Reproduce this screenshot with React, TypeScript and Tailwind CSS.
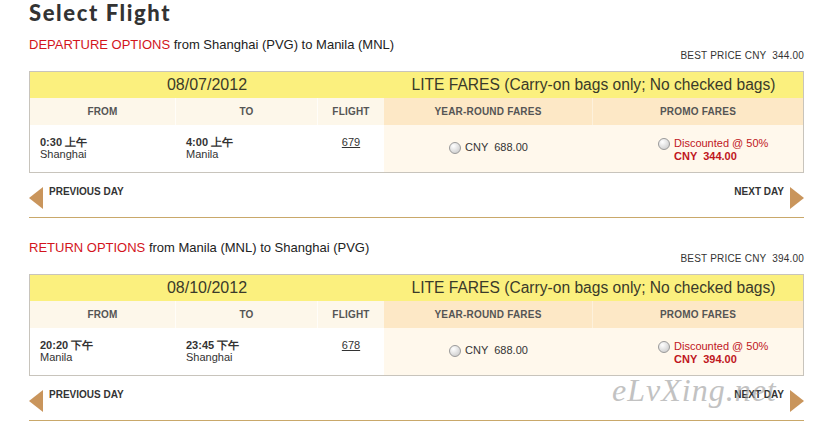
import React from 'react';

type Leg = {
  kind: string;
  route: string;
  best: string;
  date: string;
  depTime: string;
  depCity: string;
  arrTime: string;
  arrCity: string;
  flight: string;
  yearRound: string;
  promo: string;
};

const legs: Leg[] = [
  {
    kind: 'DEPARTURE OPTIONS',
    route: 'from Shanghai (PVG) to Manila (MNL)',
    best: '344.00',
    date: '08/07/2012',
    depTime: '0:30 上午',
    depCity: 'Shanghai',
    arrTime: '4:00 上午',
    arrCity: 'Manila',
    flight: '679',
    yearRound: '688.00',
    promo: '344.00',
  },
  {
    kind: 'RETURN OPTIONS',
    route: 'from Manila (MNL) to Shanghai (PVG)',
    best: '394.00',
    date: '08/10/2012',
    depTime: '20:20 下午',
    depCity: 'Manila',
    arrTime: '23:45 下午',
    arrCity: 'Shanghai',
    flight: '678',
    yearRound: '688.00',
    promo: '394.00',
  },
];

function Radio() {
  return (
    <span className="inline-block w-[12px] h-[12px] rounded-full border border-[#9a9a9a] bg-[radial-gradient(circle_at_35%_30%,#ffffff,#c4c4c4)] shrink-0" />
  );
}

function LegBlock({ leg }: { leg: Leg }) {
  return (
    <div className="ml-[29px] w-[775px]">
      <p className="text-[13px] leading-[16px] text-[#222]">
        <span className="text-[#d3141c]">{leg.kind}</span> {leg.route}
      </p>
      <p className="text-right text-[10px] leading-[12px] text-[#333] -mt-[3px] mb-[9px] whitespace-pre tracking-[0.2px]">
        BEST PRICE CNY  {leg.best}
      </p>

      <div className="border border-[#c8c4bc]">
        <div className="grid grid-cols-[354px_1fr] h-[26px] bg-[#fbf07e] leading-[26px] text-[#3a3a2a]">
          <div className="text-center text-[16px]">{leg.date}</div>
          <div className="text-center text-[15.6px]">LITE FARES (Carry-on bags only; No checked bags)</div>
        </div>
        <div className="grid grid-cols-[146px_142px_66px_209px_1fr] h-[27px] text-[10px] font-bold leading-[28px] text-[#555] tracking-[0.2px]">
          <div className="text-center bg-[#fdf7ea] border-r border-[#fffdf8]">FROM</div>
          <div className="text-center bg-[#fdf7ea] border-r border-[#fffdf8]">TO</div>
          <div className="text-center bg-[#fdf7ea]">FLIGHT</div>
          <div className="text-center bg-[#fde8c6] border-r border-[#fdf1dc]">YEAR-ROUND FARES</div>
          <div className="text-center bg-[#fde8c6]">PROMO FARES</div>
        </div>
        <div className="grid grid-cols-[146px_142px_66px_209px_1fr] h-[47px] text-[11px] text-[#333]">
          <div className="pl-[10px] pt-[11px] leading-[12px] bg-white">
            <div className="font-bold">{leg.depTime}</div>
            <div>{leg.depCity}</div>
          </div>
          <div className="pl-[10px] pt-[11px] leading-[12px] bg-white">
            <div className="font-bold">{leg.arrTime}</div>
            <div>{leg.arrCity}</div>
          </div>
          <div className="text-center pt-[11px] leading-[12px] bg-white">
            <span className="underline">{leg.flight}</span>
          </div>
          <div className="flex items-center justify-center gap-[4px] bg-[#fff8ec] text-[11px] pb-[2px]">
            <Radio />
            <span className="whitespace-pre">CNY  {leg.yearRound}</span>
          </div>
          <div className="flex items-start gap-[4px] bg-[#fff8ec] pl-[65px] pt-[12px] text-[11px] leading-[13px] text-[#c0161c]">
            <span className="mt-[1px]">
              <Radio />
            </span>
            <div>
              <div>Discounted @ 50%</div>
              <div className="font-bold whitespace-pre">CNY  {leg.promo}</div>
            </div>
          </div>
        </div>
      </div>

      <div className="flex justify-between items-start h-[45px] border-b border-[#c9a86a] pt-[13px]">
        <div className="flex items-start gap-[6px]">
          <span className="mt-[1px] w-0 h-0 border-y-[11px] border-y-transparent border-r-[14px] border-r-[#c9955c]" />
          <span className="text-[10px] font-bold leading-[12px] text-[#333]">PREVIOUS DAY</span>
        </div>
        <div className="flex items-start gap-[6px]">
          <span className="text-[10px] font-bold leading-[12px] text-[#333]">NEXT DAY</span>
          <span className="mt-[1px] w-0 h-0 border-y-[11px] border-y-transparent border-l-[14px] border-l-[#c9955c]" />
        </div>
      </div>
    </div>
  );
}

export default function App() {
  return (
    <div className="relative w-[817px] h-[423px] overflow-hidden bg-white font-['Liberation_Sans',Arial,sans-serif]">
      <h1 className="ml-[29px] pt-[1px] text-[22px] leading-[24px] font-black text-[#333] font-['Lato',sans-serif] tracking-[1.6px]">
        Select Flight
      </h1>
      <div className="mt-[12px] flex flex-col gap-[22px]">
        {legs.map(leg => (
          <LegBlock key={leg.kind} leg={leg} />
        ))}
      </div>
      <div className="absolute left-[612px] top-[366px] text-[32px] italic text-[#9a9a9a] opacity-60 font-['Liberation_Serif',serif] tracking-[1px] pointer-events-none">
        eLvXing.net
      </div>
    </div>
  );
}
